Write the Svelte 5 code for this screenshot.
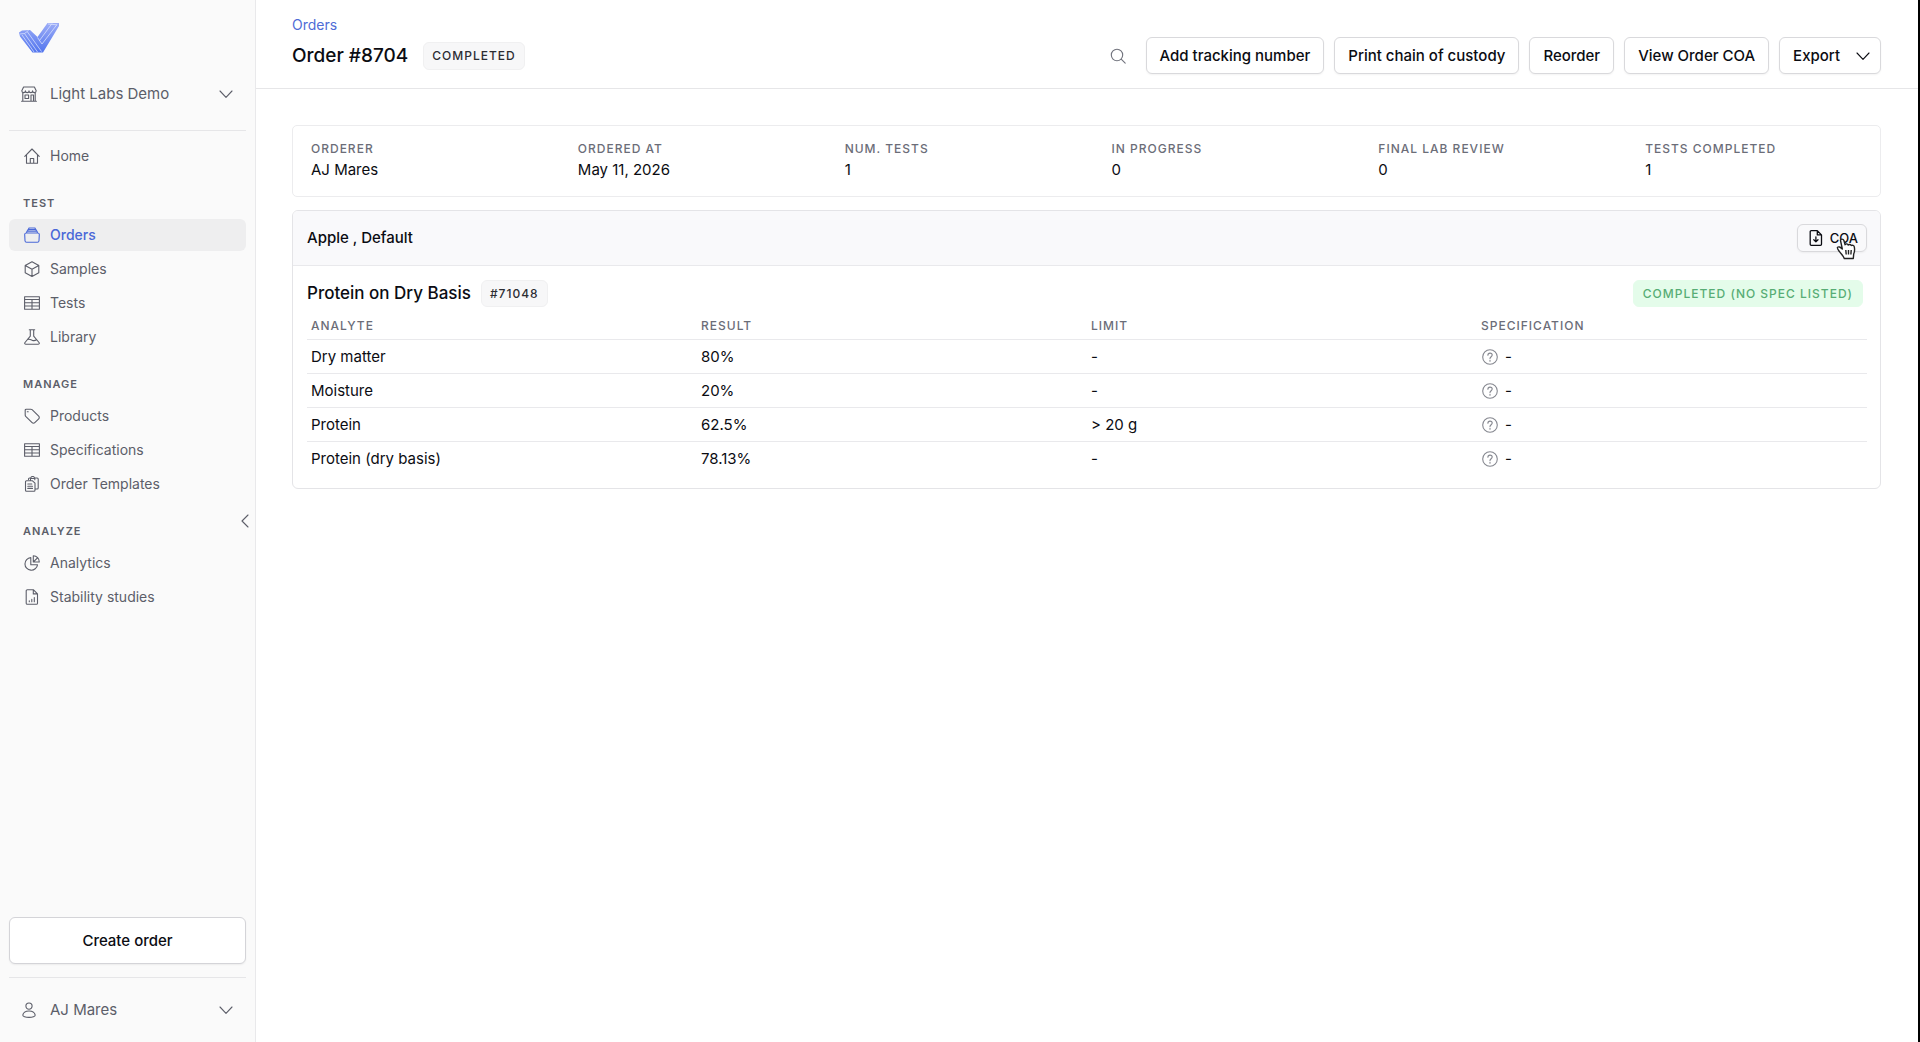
<script>
  const icons = {
    store:
      'M2.600 1h10.800l1.800 3.700c0 1.200-.9 1.900-1.800 1.900s-1.800-.7-1.800-1.700c0 1-.9 1.700-1.800 1.700S8 5.900 8 4.900c0 1-.9 1.700-1.800 1.700s-1.800-.7-1.800-1.700c0 1-.9 1.700-1.800 1.700S.8 5.900.8 4.700zM1.800 7v8M14.200 7v8M.6 15.300h14.800M4 9h3.600v3.500H4zM10 15V9h2.500v6',
    home: 'M.8 8.300 8 1l7.200 7.300M2.500 6.800v8.500h11V6.800M6.300 15v-4.500h3.400V15',
    orders: 'M2.200 6h11.600a1.500 1.500 0 0 1 1.500 1.700l-.3 6a1.600 1.600 0 0 1-1.600 1.500H2.600a1.600 1.600 0 0 1-1.600-1.500l-.3-6A1.500 1.500 0 0 1 2.200 6zM2.500 5.800l.5-1.700h10l.5 1.700M3.500 4l.5-1.500h8l.5 1.500M4.500 2.300 5 1h6l.5 1.300',
    cube: 'M8 .7l6.800 3.700v7.400L8 15.400l-6.800-3.600V4.400zM1.200 4.400 8 8.200l6.800-3.800M8 8.200v7.200',
    table: 'M.6 1.700h14.800v12.600H.6zM.6 4.500h14.800M.6 7.700h14.800M.6 11h14.800M8 4.500v9.800',
    flask: 'M5.300.8h5.400M6.300.8v6.400L1 13.500c-.7 1 0 1.800.9 1.800h12.200c.9 0 1.600-.8.9-1.800L9.700 7.200V.8M3.500 10.600c2-1 3.500.2 5 .8 1.400.5 2.700.3 4-.6',
    tag: 'M1.200 2.200a1 1 0 0 1 1-1h4.600a2 2 0 0 1 1.300.5l6.600 6.400a1.900 1.900 0 0 1 0 2.700l-3.900 3.900a1.900 1.900 0 0 1-2.700 0L1.700 8.300a2 2 0 0 1-.5-1.300zM3.300 3.700h.9',
    clipboard:
      'M4.500 3.500V3a1 1 0 0 1 1-1h1.200a2 2 0 0 1 3.900 0h2.600a1 1 0 0 1 1 1v9a1 1 0 0 1-1 1h-1.700M6.500 3.800V2.500h4.300v1.300M2.500 4.800h6l2.500 2.400v7a1 1 0 0 1-1 1H2.500a1 1 0 0 1-1-1V5.800a1 1 0 0 1 1-1zM3.800 8h4M3.800 10.200h4.700M3.800 12.400h4.700',
    pie: 'M6.800 2.600a6.300 6.300 0 1 0 6.700 7.200H6.800zM9.300.8v6.200h6A6 6 0 0 0 9.300.8zM6.800 9.800h6.700M9.300 7l4.200-4.200',
    report: 'M3.300.7h6l4.200 4.200v9.300a1.100 1.100 0 0 1-1.100 1.100H3.300a1.100 1.100 0 0 1-1.100-1.100V1.800A1.100 1.100 0 0 1 3.300.7zM9.300.7v4.200h4.200M5.300 12.800v-1M7.800 12.800v-2.500M10.300 12.800V8.500',
    download: 'M3.300.7h6l4.200 4.200v9.300a1.100 1.100 0 0 1-1.100 1.100H3.300a1.100 1.100 0 0 1-1.100-1.100V1.800A1.100 1.100 0 0 1 3.300.7zM9.300.7v4.200h4.200M7.900 6.800v5M5.800 9.800l2.100 2.100L10 9.800',
    user: 'M8 1a3.100 3.100 0 1 0 0 6.200A3.100 3.100 0 0 0 8 1zM1.800 13.200C2.200 10.500 4.800 9 8 9s5.800 1.500 6.200 4.200c.2 1.400-2.800 2.200-6.200 2.200s-6.400-.8-6.200-2.200z',
    down: 'M2 5l6 6.300L14 5',
    left: 'M11 2 5 8l6 6',
    search: 'M7 1.300a5.700 5.700 0 1 0 0 11.400A5.700 5.700 0 0 0 7 1.300zM11.200 11.200l4 4',
    help: 'M8 .7a7.300 7.300 0 1 0 0 14.600A7.300 7.300 0 0 0 8 .7zM5.900 6.200c0-1.300.9-2.100 2.100-2.100s2.200.8 2.200 2c0 1.600-2.200 1.700-2.200 3.500M8 11.300v1'
  };

  const groups = [
    { title: 'Test', items: [['Orders', 'orders'], ['Samples', 'cube'], ['Tests', 'table'], ['Library', 'flask']] },
    { title: 'Manage', items: [['Products', 'tag'], ['Specifications', 'table'], ['Order Templates', 'clipboard']] },
    { title: 'Analyze', items: [['Analytics', 'pie'], ['Stability studies', 'report']] }
  ];

  const actions = ['Add tracking number', 'Print chain of custody', 'Reorder', 'View Order COA'];

  const summary = [
    ['Orderer', 'AJ Mares'],
    ['Ordered at', 'May 11, 2026'],
    ['Num. tests', '1'],
    ['In progress', '0'],
    ['Final lab review', '0'],
    ['Tests completed', '1']
  ];

  const rows = [
    ['Dry matter', '80%', '-', '-'],
    ['Moisture', '20%', '-', '-'],
    ['Protein', '62.5%', '> 20 g', '-'],
    ['Protein (dry basis)', '78.13%', '-', '-']
  ];
</script>

{#snippet icon(name)}
  <svg class="icon" viewBox="0 0 16 16" aria-hidden="true"><path d={icons[name]} /></svg>
{/snippet}

<div class="app">
  <aside class="sidebar">
    <a class="logo" href="#home" aria-label="Light Labs">
      <svg viewBox="0 0 40 30" aria-hidden="true">
        <defs>
          <linearGradient id="mark" x1="0" y1="0" x2="0" y2="1">
            <stop offset="0" stop-color="#9dadf7" />
            <stop offset="1" stop-color="#5275ee" />
          </linearGradient>
        </defs>
        <path fill="url(#mark)" d="M0 9.500 3 7.500 11 7l7.500 7L28.500 0H40v3L24 29.500H13.500L1 13.500z" />
        <path class="seams" d="M1 11 5.500 10.500l13 18.500M5.500 10.500l4-3M8.500 9l14 19.500M3 12l12 17M18.500 14.500l4.500 6.500L38 1.500M20.500 17.500 33 .5M29 1l9 .8" />
      </svg>
    </a>
    <button class="switcher">
      {@render icon('store')}<span>Light Labs Demo</span>{@render icon('down')}
    </button>
    <nav>
      <a class="item" href="#home">{@render icon('home')}Home</a>
      {#each groups as group}
        <section>
          <h2>{group.title}</h2>
          {#each group.items as [label, name]}
            <a class="item" class:active={label === 'Orders'} href="#nav">{@render icon(name)}{label}</a>
          {/each}
        </section>
      {/each}
    </nav>
    <button class="create">Create order</button>
    <button class="switcher account">
      {@render icon('user')}<span>AJ Mares</span>{@render icon('down')}
    </button>
    <button class="collapse" aria-label="Collapse sidebar">{@render icon('left')}</button>
  </aside>

  <main>
    <header>
      <div class="heading">
        <a href="#orders">Orders</a>
        <div class="title">
          <h1>Order #8704</h1>
          <span class="badge">Completed</span>
        </div>
      </div>
      <div class="actions">
        <button class="search" aria-label="Search">{@render icon('search')}</button>
        {#each actions as action}
          <button class="btn">{action}</button>
        {/each}
        <button class="btn export">Export {@render icon('down')}</button>
      </div>
    </header>

    <div class="content">
      <dl class="summary">
        {#each summary as [label, value]}
          <div>
            <dt>{label}</dt>
            <dd>{value}</dd>
          </div>
        {/each}
      </dl>

      <section class="card">
        <div class="card-head">
          <h2>Apple , Default</h2>
          <button class="coa">
            {@render icon('download')}COA
            <svg class="pointer" viewBox="0 0 20 22" aria-hidden="true">
              <path d="M4.500 2.500C4.500.6 7.300.6 7.900 2.500l1.200 4.200c.6-1.200 2.700-1 3.100.3.700-1 2.700-.6 3.100.6.900-.8 2.700-.3 3 1.200.5 2.700.5 5-.6 7.200l-.4 4.500H8.300c-.7-2.500-3-4.300-4.800-6.800C2 11.700.9 10.300 1.500 9.400c.9-1.200 3-.3 4.800 1.500z" />
              <path d="M9.800 12l.4 4.500M12.500 12v4.500M15.200 12l-.3 4.500" />
            </svg>
          </button>
        </div>
        <div class="card-body">
          <div class="test-head">
            <h3>Protein on Dry Basis</h3>
            <span class="badge small">#71048</span>
            <span class="badge small done">Completed (no spec listed)</span>
          </div>
          <table>
            <thead>
              <tr><th>Analyte</th><th>Result</th><th>Limit</th><th>Specification</th></tr>
            </thead>
            <tbody>
              {#each rows as [analyte, result, limit, spec]}
                <tr>
                  <td>{analyte}</td>
                  <td>{result}</td>
                  <td>{limit}</td>
                  <td><span class="spec">{@render icon('help')}{spec}</span></td>
                </tr>
              {/each}
            </tbody>
          </table>
        </div>
      </section>
    </div>
  </main>
</div>

<style>
  :global(body) {
    margin: 0;
    background: #fff;
  }
  .app {
    display: flex;
    min-height: 100vh;
    box-sizing: border-box;
    border-right: 2px solid #000;
    font: 400 15px/20px Inter, 'Liberation Sans', sans-serif;
    color: #0b0c12;
  }
  .app :global(*) {
    box-sizing: border-box;
  }
  h1, h2, h3, dl, dd {
    margin: 0;
  }
  a {
    color: inherit;
    text-decoration: none;
  }
  button {
    padding: 0;
    border: 0;
    background: none;
    font: inherit;
    color: inherit;
    cursor: pointer;
  }
  .icon {
    width: 16px;
    height: 16px;
    flex: none;
    fill: none;
    stroke: currentColor;
    stroke-width: 1.1;
    stroke-linecap: round;
    stroke-linejoin: round;
  }

  .sidebar {
    position: relative;
    display: flex;
    flex-direction: column;
    flex: none;
    width: 256px;
    padding: 23px 9px 0;
    border-right: 1px solid #e9e9eb;
    background: #fafafa;
    color: #5c5e69;
  }
  .logo {
    width: 40px;
    height: 30px;
    margin-left: 10px;
  }
  .logo svg {
    display: block;
    width: 40px;
    height: 30px;
  }
  .seams {
    fill: none;
    stroke: #e3e9ff;
    stroke-width: 0.7;
  }
  .switcher {
    display: flex;
    align-items: center;
    gap: 13px;
    height: 78px;
    padding: 4px 12px 0;
    border-bottom: 1px solid #e6e6e8;
    text-align: left;
  }
  .switcher span {
    flex: 1;
  }
  nav {
    flex: 1;
    padding-top: 9px;
  }
  .item {
    display: flex;
    align-items: center;
    gap: 10px;
    height: 32px;
    padding: 0 15px;
    border-radius: 6px;
    font-size: 14px;
  }
  .item + .item {
    margin-top: 2px;
  }
  .active {
    background: #eeeeef;
    color: #4a68d8;
    font-weight: 500;
  }
  nav section {
    margin-top: 23px;
  }
  nav h2 {
    margin-bottom: 8px;
    padding-left: 14px;
    font-size: 11px;
    line-height: 16px;
    font-weight: 600;
    letter-spacing: 1px;
    text-transform: uppercase;
  }
  .create {
    height: 47px;
    margin-bottom: 13px;
    border: 1px solid #d4d4d8;
    border-radius: 6px;
    background: #fff;
    box-shadow: 0 1px 2px #0000000f;
    color: #0b0c12;
    font-weight: 500;
  }
  .account {
    height: 65px;
    padding-top: 0;
    border-top: 1px solid #e6e6e8;
    border-bottom: 0;
  }
  .collapse {
    position: absolute;
    top: 50%;
    right: 2px;
    height: 16px;
    transform: translateY(-50%);
  }
  .collapse .icon {
    display: block;
  }

  main {
    flex: 1;
    min-width: 0;
  }
  header {
    display: flex;
    align-items: flex-start;
    justify-content: space-between;
    height: 89px;
    padding: 15px 37px 0 36px;
    border-bottom: 1px solid #e6e6e8;
  }
  .heading > a {
    display: block;
    color: #4f6cd6;
    font-size: 14px;
  }
  .title {
    display: flex;
    align-items: center;
    gap: 15px;
    margin-top: 7px;
  }
  h1 {
    font-size: 19px;
    line-height: 28px;
    font-weight: 500;
  }
  .badge {
    padding: 0 8px;
    border: 1px solid #f0f0f1;
    border-radius: 6px;
    background: #f7f7f8;
    color: #2c2d33;
    font-size: 12px;
    line-height: 26px;
    font-weight: 500;
    letter-spacing: 1px;
    text-transform: uppercase;
  }
  .small {
    line-height: 25px;
  }
  .actions {
    display: flex;
    align-items: center;
    gap: 10px;
    margin-top: 22px;
  }
  .search {
    height: 16px;
    margin-right: 10px;
    color: #71737d;
  }
  .search .icon {
    display: block;
  }
  .btn {
    display: flex;
    align-items: center;
    height: 37px;
    padding: 0 13px;
    border: 1px solid #d9d9dc;
    border-radius: 6px;
    background: #fff;
    box-shadow: 0 1px 2px #0000000d;
    font-weight: 500;
    white-space: nowrap;
  }
  .export {
    gap: 15px;
    padding-right: 9px;
  }

  .content {
    padding: 36px 37px 36px 36px;
  }
  .summary {
    display: grid;
    grid-template-columns: repeat(6, 1fr);
    gap: 50px;
    margin-bottom: 13px;
    padding: 14px 18px;
    border: 1px solid #ececee;
    border-radius: 5px;
  }
  dt, th {
    color: #6b6d78;
    font-size: 12px;
    line-height: 18px;
    font-weight: 500;
    letter-spacing: 1px;
    text-transform: uppercase;
    white-space: nowrap;
  }
  dd {
    line-height: 24px;
  }
  .card {
    border: 1px solid #e4e4e7;
    border-radius: 6px;
    overflow: hidden;
  }
  .card-head {
    display: flex;
    align-items: center;
    justify-content: space-between;
    height: 55px;
    padding: 0 13px 0 14px;
    border-bottom: 1px solid #e9e9ec;
    background: #f9f9fb;
  }
  .card-head h2 {
    font-size: 15px;
    font-weight: 500;
  }
  .coa {
    position: relative;
    display: flex;
    align-items: center;
    gap: 6px;
    height: 28px;
    padding: 0 8px 0 10px;
    border: 1px solid #d9d9dc;
    border-radius: 6px;
    box-shadow: 0 1px 2px #0000000d;
    font-size: 13px;
    font-weight: 500;
  }
  .coa .icon {
    stroke-width: 1.3;
  }
  .pointer {
    position: absolute;
    top: 13px;
    right: 10px;
    width: 20px;
    height: 22px;
    fill: #fff;
    stroke: #222;
    stroke-width: 1.4;
    stroke-linejoin: round;
  }
  .card-body {
    padding: 14px 13px 12px 14px;
  }
  .test-head {
    display: flex;
    align-items: center;
    gap: 10px;
    padding-right: 4px;
  }
  h3 {
    font-size: 17px;
    line-height: 27px;
    font-weight: 500;
  }
  .done {
    margin-left: auto;
    padding: 0 9px;
    border-color: #e4fcea;
    background: #e4fcea;
    color: #57ad75;
  }
  table {
    width: 100%;
    margin-top: 10px;
    border-collapse: collapse;
    table-layout: fixed;
  }
  th {
    padding: 0 4px 4px;
    text-align: left;
  }
  td {
    height: 34px;
    padding: 0 4px;
    border-top: 1px solid #e9e9ec;
  }
  .spec {
    display: flex;
    align-items: center;
    gap: 7px;
    padding-left: 1px;
  }
  .spec .icon {
    color: #85878f;
  }
</style>
